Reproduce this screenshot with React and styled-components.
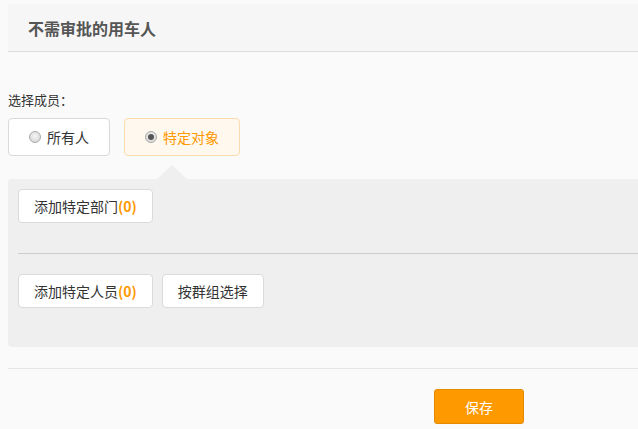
import React, { useState } from "react";
import styled, { createGlobalStyle } from "styled-components";

const GlobalStyle = createGlobalStyle`
  html, body {
    margin: 0;
    padding: 0;
    background: #fafafa;
    overflow: hidden;
  }
  body {
    font-family: "Microsoft YaHei", "Noto Sans CJK SC", "Liberation Sans", sans-serif;
    color: #333;
  }
`;

const Page = styled.div`
  width: 942px;
  padding: 4px 0 0 8px;
`;

const Header = styled.div`
  height: 47px;
  display: flex;
  align-items: center;
  padding-left: 20px;
  background: #f6f6f6;
  border-bottom: 1px solid #dcdcdc;
  font-size: 16px;
  font-weight: bold;
  color: #555;
`;

const Label = styled.div`
  margin-top: 38px;
  font-size: 13px;
  line-height: 20px;
  color: #333;
`;

const RadioRow = styled.div`
  display: flex;
  gap: 14px;
  margin-top: 8px;
`;

const RadioBox = styled.label`
  height: 38px;
  box-sizing: border-box;
  display: flex;
  align-items: center;
  gap: 6px;
  padding: 0 20px;
  border: 1px solid ${({ $active }) => ($active ? "#fbdcae" : "#d9d9d9")};
  border-radius: 4px;
  background: ${({ $active }) => ($active ? "#fff8ee" : "#fff")};
  color: ${({ $active }) => ($active ? "#ff9900" : "#333")};
  font-size: 14px;
  cursor: pointer;
`;

const RadioDot = styled.span`
  position: relative;
  width: 12px;
  height: 12px;
  box-sizing: border-box;
  border-radius: 50%;
  border: 1px solid #a9a9a9;
  background: radial-gradient(circle at 50% 40%, #f4f4f4, #d2d2d2);
  flex-shrink: 0;

  &::after {
    content: "";
    display: ${({ $checked }) => ($checked ? "block" : "none")};
    position: absolute;
    left: 2px;
    top: 2px;
    width: 6px;
    height: 6px;
    border-radius: 50%;
    background: #555;
  }
`;

const Panel = styled.div`
  position: relative;
  margin-top: 23px;
  padding: 10px;
  height: 168px;
  box-sizing: border-box;
  background: #efefef;
  border-radius: 4px;
`;

const Arrow = styled.span`
  position: absolute;
  top: -14px;
  left: 149px;
  width: 0;
  height: 0;
  border-left: 15px solid transparent;
  border-right: 15px solid transparent;
  border-bottom: 14px solid #efefef;
`;

const ButtonRow = styled.div`
  display: flex;
  gap: 9px;
`;

const Divider = styled.div`
  height: 1px;
  background: #cbcbcb;
  margin: 30px 0 20px;
`;

const WhiteButton = styled.button`
  height: 34px;
  padding: 0 15px;
  border: 1px solid #dadada;
  border-radius: 4px;
  background: #fff;
  font-family: inherit;
  font-size: 14px;
  color: #333;
  cursor: pointer;
`;

const Count = styled.b`
  color: #ff9900;
`;

const Footer = styled.div`
  margin-top: 21px;
  border-top: 1px solid #e6e6e6;
  padding-top: 20px;
  display: flex;
  justify-content: center;
`;

const SaveButton = styled.button`
  width: 90px;
  height: 35px;
  border: 1px solid #e58a00;
  border-radius: 3px;
  background: #ff9900;
  color: #fff;
  font-family: inherit;
  font-size: 14px;
  cursor: pointer;
`;

const options = [
  { key: "all", text: "所有人" },
  { key: "specific", text: "特定对象" },
];

export default function App() {
  const [mode, setMode] = useState("specific");

  return (
    <>
      <GlobalStyle />
      <Page>
        <Header>不需审批的用车人</Header>
        <Label>选择成员：</Label>
        <RadioRow>
          {options.map((o) => (
            <RadioBox key={o.key} $active={mode === o.key} onClick={() => setMode(o.key)}>
              <RadioDot $checked={mode === o.key} />
              {o.text}
            </RadioBox>
          ))}
        </RadioRow>
        <Panel>
          <Arrow />
          <ButtonRow>
            <WhiteButton>
              添加特定部门<Count>(0)</Count>
            </WhiteButton>
          </ButtonRow>
          <Divider />
          <ButtonRow>
            <WhiteButton>
              添加特定人员<Count>(0)</Count>
            </WhiteButton>
            <WhiteButton>按群组选择</WhiteButton>
          </ButtonRow>
        </Panel>
        <Footer>
          <SaveButton>保存</SaveButton>
        </Footer>
      </Page>
    </>
  );
}
